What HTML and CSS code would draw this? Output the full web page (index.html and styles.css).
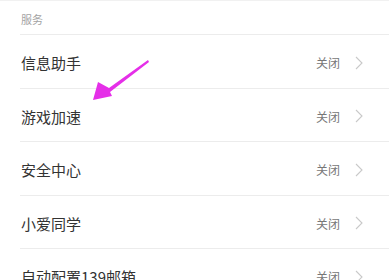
FILE: index.html
```html
<!DOCTYPE html>
<html lang="zh">
<head>
<meta charset="utf-8">
<link rel="stylesheet" href="styles.css">
</head>
<body>
<div class="page">
  <div class="section-title">服务</div>
  <ul class="list">
    <li class="row"><span class="label">信息助手</span><span class="value">关闭</span><svg class="chev" viewBox="0 0 8 14" width="8" height="14"><path d="M1 1 L7 7 L1 13" fill="none" stroke="#c9c9c9" stroke-width="1.1"/></svg></li>
    <li class="row"><span class="label">游戏加速</span><span class="value">关闭</span><svg class="chev" viewBox="0 0 8 14" width="8" height="14"><path d="M1 1 L7 7 L1 13" fill="none" stroke="#c9c9c9" stroke-width="1.1"/></svg></li>
    <li class="row"><span class="label">安全中心</span><span class="value">关闭</span><svg class="chev" viewBox="0 0 8 14" width="8" height="14"><path d="M1 1 L7 7 L1 13" fill="none" stroke="#c9c9c9" stroke-width="1.1"/></svg></li>
    <li class="row"><span class="label">小爱同学</span><span class="value">关闭</span><svg class="chev" viewBox="0 0 8 14" width="8" height="14"><path d="M1 1 L7 7 L1 13" fill="none" stroke="#c9c9c9" stroke-width="1.1"/></svg></li>
    <li class="row"><span class="label">自动配置139邮箱</span><span class="value">关闭</span><svg class="chev" viewBox="0 0 8 14" width="8" height="14"><path d="M1 1 L7 7 L1 13" fill="none" stroke="#c9c9c9" stroke-width="1.1"/></svg></li>
  </ul>
  <svg class="arrow" viewBox="0 0 389 280" width="389" height="280">
    <polygon points="148,60 109,88 98,82 93,100 112,96 110,92 149,62" fill="#e52fe8"/>
  </svg>
</div>
</body>
</html>
```
FILE: styles.css
```css
* { box-sizing: border-box; }
html, body { margin: 0; padding: 0; background: #fff; }
body {
  font-family: "Noto Sans CJK SC", "Noto Sans", sans-serif;
  width: 389px;
  height: 280px;
  overflow: hidden;
}
.page {
  position: relative;
  border-top: 1px solid #f1f1f1;
}
.section-title {
  height: 33px;
  padding: 10px 0 0 21px;
  font-size: 11px;
  line-height: 16px;
  color: #a3a3a3;
}
.list {
  list-style: none;
  margin: 0;
  padding: 0 0 0 20px;
}
.row {
  display: flex;
  align-items: center;
  height: 53.5px;
  border-top: 1px solid #ececec;
  padding-left: 1px;
  padding-right: 26px;
}
.label {
  flex: 1;
  font-size: 15px;
  color: #333;
  padding-top: 3px;
}
.value {
  font-size: 12px;
  color: #777;
  margin-right: 15px;
  padding-top: 3px;
}
.chev { display: block; margin-top: 3px; }
.arrow {
  position: absolute;
  left: 0;
  top: -1px;
  pointer-events: none;
}
```
